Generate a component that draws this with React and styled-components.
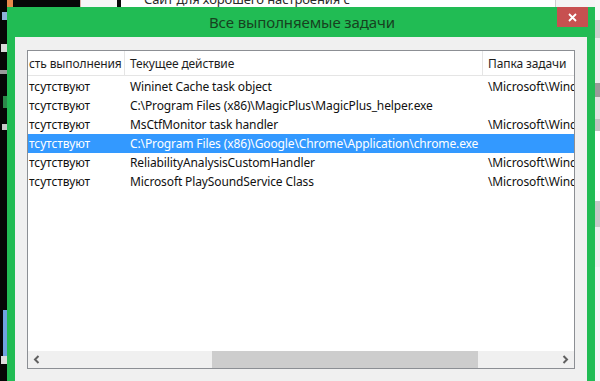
import React from 'react';
import styled, { createGlobalStyle } from 'styled-components';

const Global = createGlobalStyle`
  html, body { margin: 0; padding: 0; background: #000; }
  body { font-family: "Noto Sans", "Open Sans", sans-serif; }
`;

const Desktop = styled.div`
  position: relative;
  width: 600px;
  height: 381px;
  overflow: hidden;
  background: #060606;
`;

/* ---------- background pieces of the desktop ---------- */
const TopStrip = styled.div`
  position: absolute;
  left: 0;
  top: 0;
  width: 600px;
  height: 7px;
  display: flex;
  overflow: hidden;
`;

const StripPiece = styled.div`
  width: ${(p) => p.$w}px;
  flex: ${(p) => (p.$grow ? 1 : 'none')};
  background: ${(p) => p.$bg};
  border-left: ${(p) => (p.$edge ? `1px solid ${p.$edge}` : 'none')};
  overflow: hidden;
  position: relative;
`;

const ClippedHeadline = styled.div`
  margin-top: -7px;
  padding-left: 23px;
  font-size: 13px;
  line-height: 13px;
  letter-spacing: -0.1px;
  color: #2a2a2a;
  white-space: nowrap;
`;

const LeftStrip = styled.div`
  position: absolute;
  left: 0;
  top: 0;
  width: 7px;
  height: 381px;
  display: flex;
  flex-direction: column;
`;

const RightStrip = styled.div`
  position: absolute;
  right: 0;
  top: 0;
  width: 5px;
  height: 381px;
  display: flex;
  flex-direction: column;
  background: #f2f2f2;
`;

const Bit = styled.div`
  height: ${(p) => p.$h}px;
  background: ${(p) => p.$bg};
  margin-left: ${(p) => p.$ml || 0}px;
  flex: none;
`;

/* ---------- the window ---------- */
const Window = styled.div`
  position: absolute;
  left: 7px;
  top: 7px;
  width: 588px;
  height: 400px;
  box-sizing: border-box;
  background: #21bc54;
  padding: 0 8px;
  display: flex;
  flex-direction: column;
`;

const TitleBar = styled.div`
  position: relative;
  height: 30px;
  display: flex;
  align-items: center;
  justify-content: center;
  flex: none;
`;

const Title = styled.div`
  font-size: 15px;
  color: #17421f;
  letter-spacing: -0.1px;
  padding-left: 2px;
`;

const CloseButton = styled.div`
  position: absolute;
  right: -1px;
  top: 0;
  width: 31px;
  height: 20px;
  background: #c75050;
  display: flex;
  align-items: center;
  justify-content: center;
`;

const Client = styled.div`
  flex: 1;
  background: #f0f0f0;
  padding: 13px 12px 0 12px;
`;

const ListView = styled.div`
  height: 319px;
  box-sizing: border-box;
  border: 1px solid #8c8f94;
  background: #fff;
  display: flex;
  flex-direction: column;
  overflow: hidden;
`;

const HeaderRow = styled.div`
  display: grid;
  grid-template-columns: 97px 358px 1fr;
  height: 24px;
  border-bottom: 1px solid #e5e5e5;
  flex: none;
`;

const HeaderCell = styled.div`
  display: flex;
  align-items: center;
  padding-left: ${(p) => p.$pad}px;
  border-right: ${(p) => (p.$sep ? '1px solid #e5e5e5' : 'none')};
  font-size: 12px;
  letter-spacing: -0.12px;
  color: #1e1e1e;
  white-space: nowrap;
  overflow: hidden;
`;

const Body = styled.div`
  flex: 1;
  padding-top: 1px;
`;

const Row = styled.div`
  display: grid;
  grid-template-columns: 97px 358px 1fr;
  height: 19px;
  background: ${(p) => (p.$selected ? '#3399ff' : 'transparent')};
  color: ${(p) => (p.$selected ? '#fff' : '#111')};
`;

const Cell = styled.div`
  display: flex;
  align-items: center;
  padding-left: ${(p) => p.$pad}px;
  font-size: 12px;
  letter-spacing: -0.12px;
  white-space: nowrap;
  overflow: hidden;
`;

const HScroll = styled.div`
  height: 17px;
  flex: none;
  display: flex;
  background: #f0f0f0;
`;

const ArrowButton = styled.div`
  width: 17px;
  display: flex;
  align-items: center;
  justify-content: center;
`;

const Track = styled.div`
  flex: 1;
  display: flex;
`;

const Thumb = styled.div`
  margin-left: ${(p) => p.$offset}px;
  width: ${(p) => p.$size}px;
  background: #cdcdcd;
`;

const Chevron = ({ dir }) => (
  <svg width="7" height="9" viewBox="0 0 7 9">
    <path
      d={dir === 'left' ? 'M5.5 1 L2 4.5 L5.5 8' : 'M1.5 1 L5 4.5 L1.5 8'}
      fill="none"
      stroke="#606060"
      strokeWidth="2"
    />
  </svg>
);

const rows = [
  { state: 'тсутствуют', action: 'Wininet Cache task object', folder: '\\Microsoft\\Windows' },
  { state: 'тсутствуют', action: 'C:\\Program Files (x86)\\MagicPlus\\MagicPlus_helper.exe', folder: '' },
  { state: 'тсутствуют', action: 'MsCtfMonitor task handler', folder: '\\Microsoft\\Windows' },
  { state: 'тсутствуют', action: 'C:\\Program Files (x86)\\Google\\Chrome\\Application\\chrome.exe', folder: '', selected: true },
  { state: 'тсутствуют', action: 'ReliabilityAnalysisCustomHandler', folder: '\\Microsoft\\Windows' },
  { state: 'тсутствуют', action: 'Microsoft PlaySoundService Class', folder: '\\Microsoft\\Windows' },
];

export default function App() {
  return (
    <>
      <Global />
      <Desktop>
        <TopStrip>
          <StripPiece $w={13} $bg="#e8894a" />
          <StripPiece $w={67} $bg="#070707" />
          <StripPiece $w={36} $bg="#f6f6f6" $edge="#d9b0a8" />
          <StripPiece $w={4} $bg="#070707" />
          <StripPiece $grow $bg="#ffffff">
            <ClippedHeadline>Сайт для хорошего настроения с</ClippedHeadline>
          </StripPiece>
          <StripPiece $w={44} $bg="#f4f4f4" $edge="#cfcfcf" />
        </TopStrip>

        <LeftStrip>
          <Bit $h={12} $bg="#060606" />
          <Bit $h={8} $bg="#8fb0d8" $ml={2} />
          <Bit $h={24} $bg="#060606" />
          <Bit $h={8} $bg="#d9d9d9" $ml={1} />
          <Bit $h={18} $bg="#060606" />
          <Bit $h={4} $bg="#9a9a9a" />
          <Bit $h={22} $bg="#060606" />
          <Bit $h={12} $bg="#2c8a4a" $ml={3} />
          <Bit $h={16} $bg="#060606" />
          <Bit $h={6} $bg="#c8c8c8" $ml={2} />
          <Bit $h={180} $bg="#060606" />
          <Bit $h={46} $bg="#6fa4de" $ml={3} />
          <Bit $h={8} $bg="#dcdcdc" $ml={1} />
          <Bit $h={40} $bg="#060606" />
        </LeftStrip>

        <RightStrip>
          <Bit $h={20} $bg="#f7f7f7" />
          <Bit $h={18} $bg="#cfcfcf" />
          <Bit $h={45} $bg="#ececec" />
          <Bit $h={14} $bg="#9a9a9a" />
          <Bit $h={22} $bg="#e2e2e2" />
          <Bit $h={12} $bg="#c4c4c4" />
          <Bit $h={60} $bg="#ffffff" />
          <Bit $h={10} $bg="#fdfdfd" />
          <Bit $h={26} $bg="#c9c9c9" />
          <Bit $h={40} $bg="#eeeeee" />
          <Bit $h={114} $bg="#f4f4f4" />
        </RightStrip>

        <Window>
          <TitleBar>
            <Title>Все выполняемые задачи</Title>
            <CloseButton>
              <svg width="9" height="9" viewBox="0 0 9 9">
                <path d="M1 1 L8 8 M8 1 L1 8" stroke="#fff" strokeWidth="1.8" />
              </svg>
            </CloseButton>
          </TitleBar>
          <Client>
            <ListView>
              <HeaderRow>
                <HeaderCell $pad={1} $sep>сть выполнения</HeaderCell>
                <HeaderCell $pad={5} $sep>Текущее действие</HeaderCell>
                <HeaderCell $pad={5}>Папка задачи</HeaderCell>
              </HeaderRow>
              <Body>
                {rows.map((r, i) => (
                  <Row key={i} $selected={r.selected}>
                    <Cell $pad={1}>{r.state}</Cell>
                    <Cell $pad={5}>{r.action}</Cell>
                    <Cell $pad={5}>{r.folder}</Cell>
                  </Row>
                ))}
              </Body>
              <HScroll>
                <ArrowButton>
                  <Chevron dir="left" />
                </ArrowButton>
                <Track>
                  <Thumb $offset={167} $size={266} />
                </Track>
                <ArrowButton>
                  <Chevron dir="right" />
                </ArrowButton>
              </HScroll>
            </ListView>
          </Client>
        </Window>
      </Desktop>
    </>
  );
}
